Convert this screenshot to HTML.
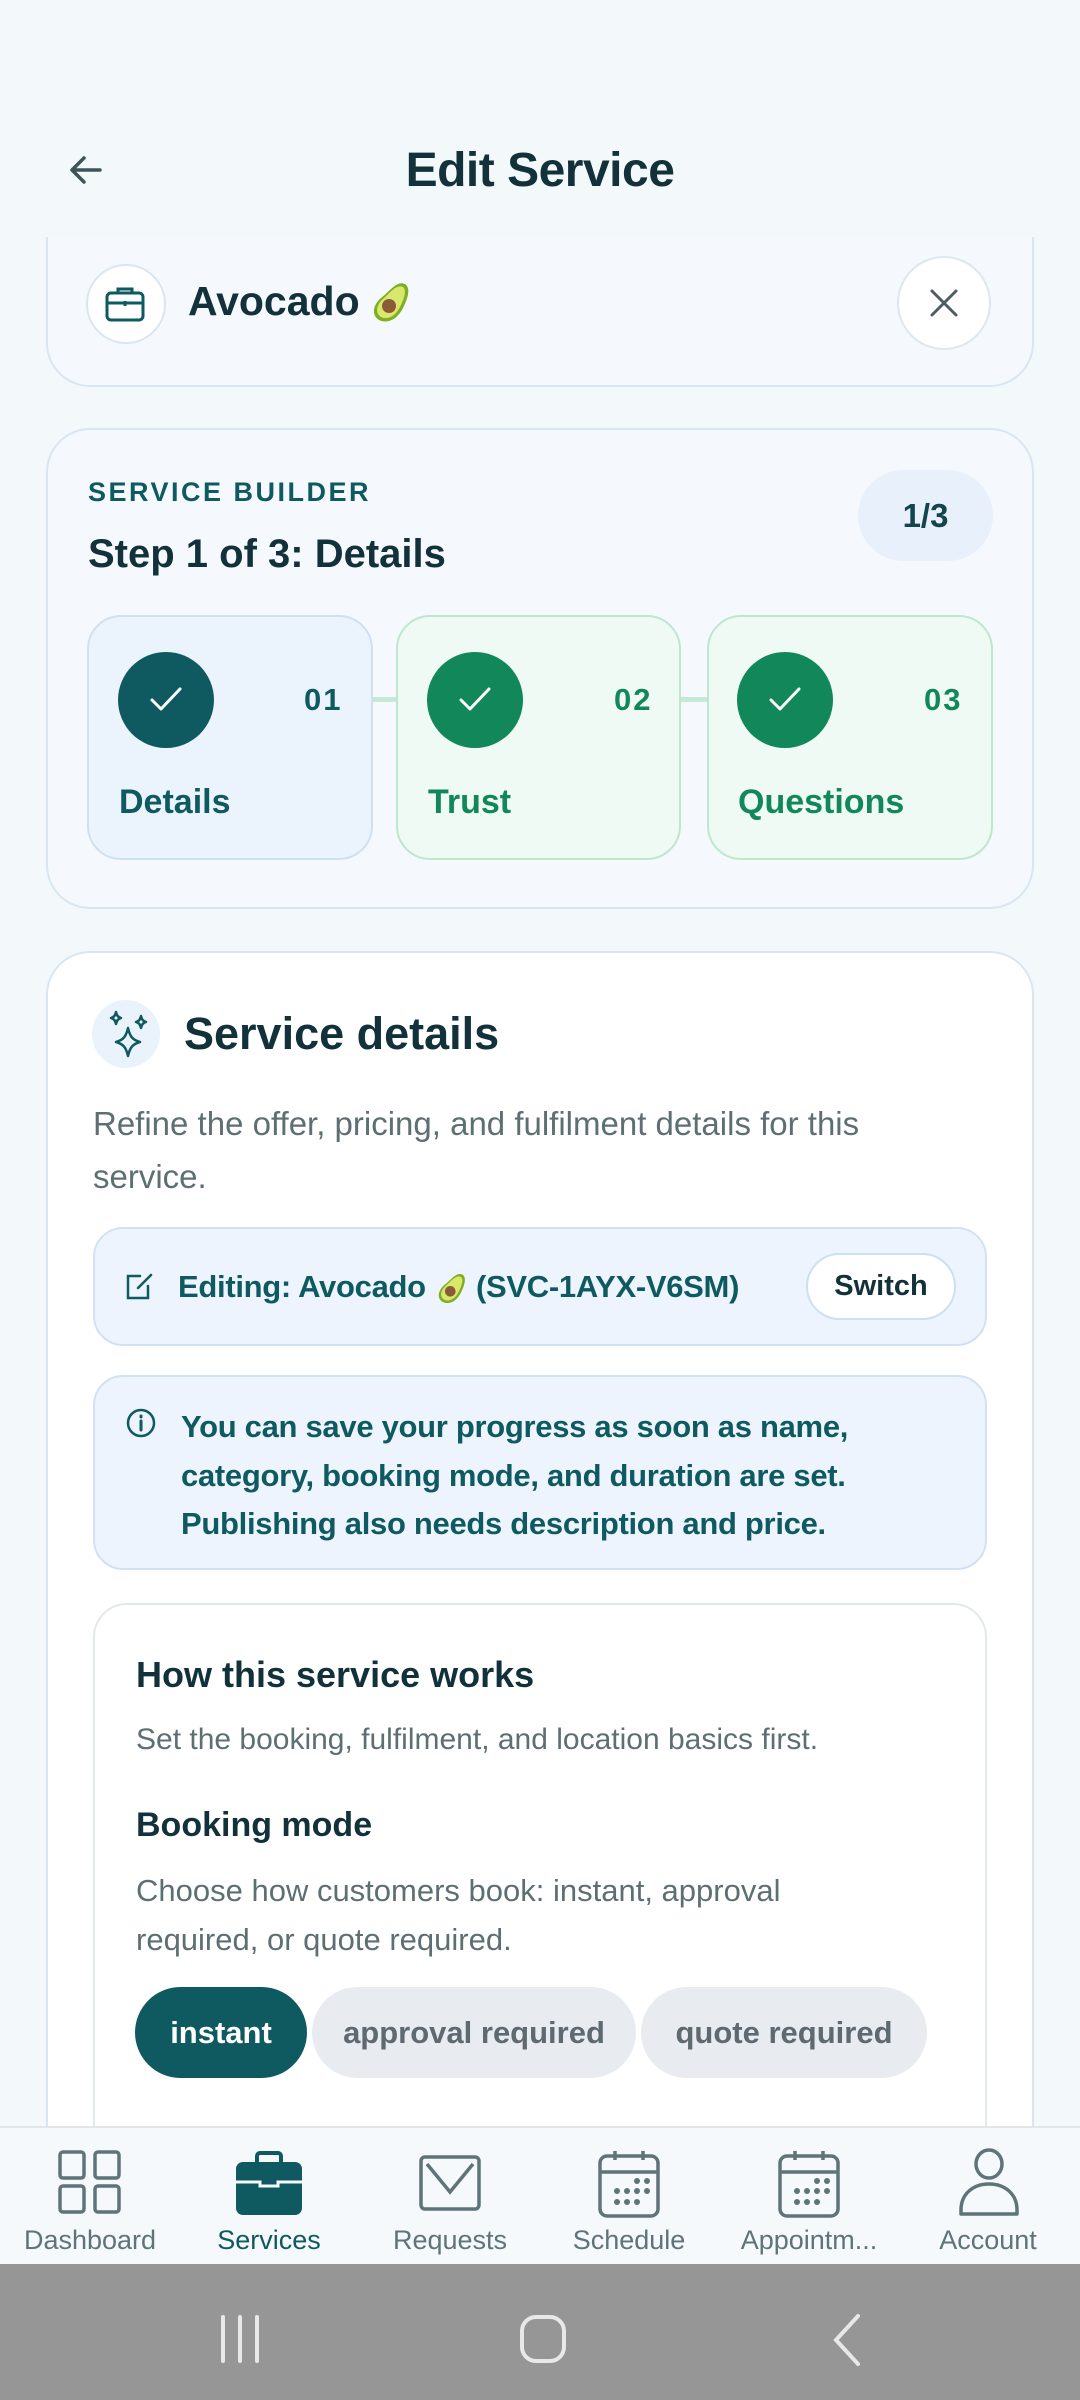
<!DOCTYPE html>
<html><head><meta charset="utf-8"><style>
*{margin:0;padding:0;box-sizing:border-box}
body{width:1080px;height:2400px;background:#f3f8fb;font-family:"Liberation Sans",sans-serif;position:relative;overflow:hidden;color:#12313a}
.a{position:absolute;white-space:nowrap}
.card{position:absolute;border:2px solid #d8e6f2;border-radius:44px}
.b{font-weight:bold}
svg{position:absolute}
</style></head><body>

<div class="a b" style="left:0;width:1080px;text-align:center;top:143px;font-size:48px;color:#12313a;letter-spacing:-0.5px">Edit Service</div>
<svg style="left:66px;top:150px" width="40" height="40" viewBox="0 0 40 40"><path d="M34 20H6M18 8L6 20l12 12" fill="none" stroke="#3f5459" stroke-width="3.5" stroke-linecap="round" stroke-linejoin="round"/></svg>

<!-- card 1 -->
<div class="card" style="left:46px;top:237px;width:988px;height:150px;background:#f5f9fd;border-top:none;border-radius:0 0 44px 44px"></div>
<div style="position:absolute;left:86px;top:264px;width:80px;height:80px;border-radius:50%;background:#fff;border:2px solid #d8e6f2"></div>
<svg style="left:104px;top:284px" width="42" height="40" viewBox="0 0 42 40"><rect x="3" y="9" width="36" height="27" rx="4" fill="none" stroke="#0f5a60" stroke-width="3"/><path d="M14 9V5h14v4M3 19h36M21 17v5" fill="none" stroke="#0f5a60" stroke-width="3"/></svg>
<div class="a b" style="left:188px;top:278px;font-size:41px;color:#12313a">Avocado</div>
<svg style="left:365px;top:278px" width="50" height="50" viewBox="0 0 50 50"><path d="M40 6c6 4 3 14-2 24-6 12-16 16-24 12-8-5-6-15 2-22 8-6 16-18 24-14z" fill="#7fae24"/><path d="M38 9c4 3 1 12-3 20-5 10-13 13-19 10-6-4-5-12 2-18 7-6 13-15 20-12z" fill="#d9e86a"/><circle cx="24" cy="28" r="7" fill="#8a5a3a"/></svg>
<div style="position:absolute;left:897px;top:256px;width:94px;height:94px;border-radius:50%;background:#fff;border:2px solid #dde7ee"></div>
<svg style="left:929px;top:288px" width="30" height="30" viewBox="0 0 30 30"><path d="M3 3l24 24M27 3L3 27" stroke="#4c5e63" stroke-width="3" stroke-linecap="round"/></svg>

<!-- card 2 -->
<div class="card" style="left:46px;top:428px;width:988px;height:481px;background:#f5f9fd"></div>
<div class="a b" style="left:88px;top:477px;font-size:27px;color:#0f5a60;letter-spacing:2.5px">SERVICE BUILDER</div>
<div class="a b" style="left:88px;top:532px;font-size:40px;color:#12313a">Step 1 of 3: Details</div>
<div class="a b" style="left:858px;top:470px;width:135px;height:91px;border-radius:46px;background:#e8f1fb;text-align:center;line-height:91px;font-size:33px;color:#12454c">1/3</div>

<div style="position:absolute;left:350px;top:697px;width:48px;height:5px;background:#c6e8d6"></div>
<div style="position:absolute;left:660px;top:697px;width:48px;height:5px;background:#c6e8d6"></div>

<div class="card" style="left:87px;top:615px;width:286px;height:245px;background:#ebf3fd;border-color:#cfe0f2;border-radius:34px"></div>
<div class="card" style="left:396px;top:615px;width:285px;height:245px;background:#eefaf3;border-color:#bfe6cf;border-radius:34px"></div>
<div class="card" style="left:707px;top:615px;width:286px;height:245px;background:#eefaf3;border-color:#bfe6cf;border-radius:34px"></div>

<div style="position:absolute;left:118px;top:652px;width:96px;height:96px;border-radius:50%;background:#0f5a60"></div>
<div style="position:absolute;left:427px;top:652px;width:96px;height:96px;border-radius:50%;background:#12875a"></div>
<div style="position:absolute;left:737px;top:652px;width:96px;height:96px;border-radius:50%;background:#12875a"></div>
<svg style="left:148px;top:684px" width="36" height="30" viewBox="0 0 36 30"><path d="M4 16l9 9L32 5" fill="none" stroke="#fff" stroke-width="3" stroke-linecap="round" stroke-linejoin="round"/></svg>
<svg style="left:457px;top:684px" width="36" height="30" viewBox="0 0 36 30"><path d="M4 16l9 9L32 5" fill="none" stroke="#fff" stroke-width="3" stroke-linecap="round" stroke-linejoin="round"/></svg>
<svg style="left:767px;top:684px" width="36" height="30" viewBox="0 0 36 30"><path d="M4 16l9 9L32 5" fill="none" stroke="#fff" stroke-width="3" stroke-linecap="round" stroke-linejoin="round"/></svg>

<div class="a b" style="left:304px;top:682px;font-size:31px;color:#0f5a60;letter-spacing:2px">01</div>
<div class="a b" style="left:614px;top:682px;font-size:31px;color:#12875a;letter-spacing:2px">02</div>
<div class="a b" style="left:924px;top:682px;font-size:31px;color:#12875a;letter-spacing:2px">03</div>
<div class="a b" style="left:119px;top:783px;font-size:34px;color:#0f5a60">Details</div>
<div class="a b" style="left:428px;top:783px;font-size:34px;color:#12875a">Trust</div>
<div class="a b" style="left:738px;top:783px;font-size:34px;color:#12875a">Questions</div>

<!-- card 3 -->
<div class="card" style="left:46px;top:951px;width:988px;height:1300px;background:#fff"></div>
<div style="position:absolute;left:92px;top:1000px;width:68px;height:68px;border-radius:50%;background:#eaf3fc"></div>
<svg style="left:100px;top:1006px" width="56" height="56" viewBox="0 0 56 56"><path d="M28 22c2 9 5 12 12 14-7 2-10 5-12 14-2-9-5-12-12-14 7-2 10-5 12-14zM16 6c1 4 2 5 5 6-3 1-4 2-5 6-1-4-2-5-5-6 3-1 4-2 5-6zM41 10c1 4 2 5 5 6-3 1-4 2-5 6-1-4-2-5-5-6 3-1 4-2 5-6z" fill="none" stroke="#0f5a60" stroke-width="2.5" stroke-linejoin="round"/></svg>
<div class="a b" style="left:184px;top:1008px;font-size:45px;color:#12313a">Service details</div>
<div class="a" style="left:93px;top:1097px;font-size:33px;color:#5e6f73;line-height:53px">Refine the offer, pricing, and fulfilment details for this<br>service.</div>

<div class="card" style="left:93px;top:1227px;width:894px;height:119px;background:#edf4fd;border-color:#d2e2f4;border-radius:30px"></div>
<svg style="left:124px;top:1272px" width="30" height="30" viewBox="0 0 30 30"><path d="M16 4H4v22h20V14M14 16L27 3" fill="none" stroke="#0f5a60" stroke-width="2.5" stroke-linecap="round"/></svg>
<div class="a b" style="left:178px;top:1269px;font-size:31px;color:#0f5a60;letter-spacing:-0.3px">Editing: Avocado</div>
<svg style="left:432px;top:1270px" width="38" height="38" viewBox="0 0 50 50"><path d="M40 6c6 4 3 14-2 24-6 12-16 16-24 12-8-5-6-15 2-22 8-6 16-18 24-14z" fill="#7fae24"/><path d="M38 9c4 3 1 12-3 20-5 10-13 13-19 10-6-4-5-12 2-18 7-6 13-15 20-12z" fill="#d9e86a"/><circle cx="24" cy="28" r="7" fill="#8a5a3a"/></svg>
<div class="a b" style="left:476px;top:1269px;font-size:31px;color:#0f5a60;letter-spacing:-0.3px">(SVC-1AYX-V6SM)</div>
<div class="a b" style="left:806px;top:1253px;width:150px;height:67px;border-radius:34px;background:#fff;border:2px solid #cddff2;text-align:center;line-height:63px;font-size:29px;color:#12313a">Switch</div>

<div class="card" style="left:93px;top:1375px;width:894px;height:195px;background:#edf4fd;border-color:#d2e2f4;border-radius:30px"></div>
<svg style="left:125px;top:1407px" width="32" height="32" viewBox="0 0 32 32"><circle cx="16" cy="16" r="13" fill="none" stroke="#0f5a60" stroke-width="2.5"/><path d="M16 14v9M16 9v1" stroke="#0f5a60" stroke-width="3" stroke-linecap="round"/></svg>
<div class="a b" style="left:181px;top:1403px;font-size:31px;color:#0f5a60;line-height:48.5px;letter-spacing:-0.3px">You can save your progress as soon as name,<br>category, booking mode, and duration are set.<br>Publishing also needs description and price.</div>

<div class="card" style="left:93px;top:1603px;width:894px;height:700px;background:#fff;border-color:#e2e8ec;border-radius:34px"></div>
<div class="a b" style="left:136px;top:1654px;font-size:36px;color:#12313a">How this service works</div>
<div class="a" style="left:136px;top:1723px;font-size:30px;color:#5e6f73">Set the booking, fulfilment, and location basics first.</div>
<div class="a b" style="left:136px;top:1806px;font-size:34px;color:#12313a">Booking mode</div>
<div class="a" style="left:136px;top:1866px;font-size:31px;color:#5e6f73;line-height:49px">Choose how customers book: instant, approval<br>required, or quote required.</div>
<div class="a b" style="left:135px;top:1987px;width:172px;height:91px;border-radius:46px;background:#0f5a60;color:#fff;text-align:center;line-height:91px;font-size:31px">instant</div>
<div class="a b" style="left:312px;top:1987px;width:324px;height:91px;border-radius:46px;background:#e8ebf0;color:#5e6a70;text-align:center;line-height:91px;font-size:31px">approval required</div>
<div class="a b" style="left:641px;top:1987px;width:286px;height:91px;border-radius:46px;background:#e8ebf0;color:#5e6a70;text-align:center;line-height:91px;font-size:31px">quote required</div>

<!-- bottom nav -->
<div style="position:absolute;left:0;top:2126px;width:1080px;height:138px;background:#f5f9fb;border-top:2px solid #e2e6e8"></div>
<svg style="left:56px;top:2148px" width="68" height="68" viewBox="0 0 68 68"><g fill="none" stroke="#5f7478" stroke-width="3.5"><rect x="4" y="4" width="24" height="26" rx="3"/><rect x="39" y="4" width="24" height="26" rx="3"/><rect x="4" y="38" width="24" height="26" rx="3"/><rect x="39" y="38" width="24" height="26" rx="3"/></g></svg>
<svg style="left:235px;top:2150px" width="68" height="66" viewBox="0 0 68 66"><path d="M22 12V6a3 3 0 013-3h18a3 3 0 013 3v6" fill="none" stroke="#0f5a60" stroke-width="4"/><rect x="1" y="12" width="66" height="53" rx="7" fill="#0f5a60"/><path d="M1 32h24v4h18v-4h24" stroke="#f5f9fb" stroke-width="3" fill="none"/></svg>
<svg style="left:418px;top:2152px" width="64" height="64" viewBox="0 0 64 64"><rect x="3" y="5" width="58" height="52" rx="4" fill="none" stroke="#5f7478" stroke-width="3.5"/><path d="M9 12l23 28 23-28" fill="none" stroke="#5f7478" stroke-width="3.5"/></svg>
<svg style="left:597px;top:2148px" width="64" height="70" viewBox="0 0 64 70"><rect x="3" y="8" width="58" height="60" rx="7" fill="none" stroke="#5f7478" stroke-width="3.5"/><path d="M3 24h58M18 3v9M46 3v9" stroke="#5f7478" stroke-width="3.5"/><g fill="#5f7478"><circle cx="40" cy="33" r="3"/><circle cx="50" cy="33" r="3"/><circle cx="20" cy="43" r="3"/><circle cx="30" cy="43" r="3"/><circle cx="40" cy="43" r="3"/><circle cx="50" cy="43" r="3"/><circle cx="20" cy="54" r="3"/><circle cx="30" cy="54" r="3"/><circle cx="40" cy="54" r="3"/></g></svg>
<svg style="left:777px;top:2148px" width="64" height="70" viewBox="0 0 64 70"><rect x="3" y="8" width="58" height="60" rx="7" fill="none" stroke="#5f7478" stroke-width="3.5"/><path d="M3 24h58M18 3v9M46 3v9" stroke="#5f7478" stroke-width="3.5"/><g fill="#5f7478"><circle cx="40" cy="33" r="3"/><circle cx="50" cy="33" r="3"/><circle cx="20" cy="43" r="3"/><circle cx="30" cy="43" r="3"/><circle cx="40" cy="43" r="3"/><circle cx="50" cy="43" r="3"/><circle cx="20" cy="54" r="3"/><circle cx="30" cy="54" r="3"/><circle cx="40" cy="54" r="3"/></g></svg>
<svg style="left:958px;top:2148px" width="62" height="70" viewBox="0 0 62 70"><ellipse cx="31" cy="16" rx="13" ry="14" fill="none" stroke="#5f7478" stroke-width="3.5"/><path d="M3 66v-4c0-16 12-26 28-26s28 10 28 26v4z" fill="none" stroke="#5f7478" stroke-width="3.5" stroke-linejoin="round"/></svg>
<div class="a" style="left:0;width:180px;text-align:center;top:2225px;font-size:27px;color:#5f7478">Dashboard</div>
<div class="a" style="left:179px;width:180px;text-align:center;top:2225px;font-size:27px;color:#0f5a60">Services</div>
<div class="a" style="left:360px;width:180px;text-align:center;top:2225px;font-size:27px;color:#5f7478">Requests</div>
<div class="a" style="left:539px;width:180px;text-align:center;top:2225px;font-size:27px;color:#5f7478">Schedule</div>
<div class="a" style="left:719px;width:180px;text-align:center;top:2225px;font-size:27px;color:#5f7478">Appointm...</div>
<div class="a" style="left:898px;width:180px;text-align:center;top:2225px;font-size:27px;color:#5f7478">Account</div>

<!-- system bar -->
<div style="position:absolute;left:0;top:2264px;width:1080px;height:136px;background:#959695"></div>
<svg style="left:215px;top:2313px" width="50" height="52" viewBox="0 0 50 52"><path d="M8 4v44M25 4v44M42 4v44" stroke="#e8e8e8" stroke-width="4" stroke-linecap="round"/></svg>
<div style="position:absolute;left:520px;top:2315px;width:46px;height:48px;border:4px solid #e8e8e8;border-radius:16px"></div>
<svg style="left:828px;top:2312px" width="36" height="56" viewBox="0 0 36 56"><path d="M30 4L8 28l22 24" fill="none" stroke="#e8e8e8" stroke-width="4" stroke-linecap="round"/></svg>
</body></html>
